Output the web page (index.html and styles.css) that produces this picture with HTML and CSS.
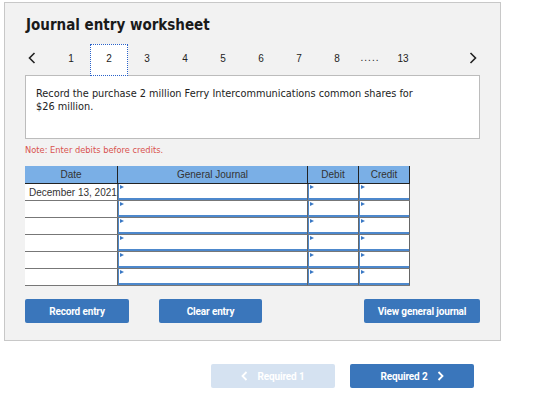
FILE: index.html
```html
<!DOCTYPE html>
<html lang="en">
<head>
    <meta charset="UTF-8">
    <title>Journal entry worksheet</title>
    <link rel="stylesheet" href="styles.css">
</head>
<body>

    <div class="panel">
        <h1 class="title">Journal entry worksheet</h1>

        <div class="pager">
            <span class="arrow prev">
                <svg width="8" height="12" viewBox="0 0 8 12"><polyline points="6.5,1 1.5,6 6.5,11" fill="none" stroke="#222" stroke-width="1.6"/></svg>
            </span>
            <span class="page">1</span>
            <span class="page current">2</span>
            <span class="page">3</span>
            <span class="page">4</span>
            <span class="page">5</span>
            <span class="page">6</span>
            <span class="page">7</span>
            <span class="page">8</span>
            <span class="dots">.....</span>
            <span class="page">13</span>
            <span class="arrow next">
                <svg width="8" height="12" viewBox="0 0 8 12"><polyline points="1.5,1 6.5,6 1.5,11" fill="none" stroke="#222" stroke-width="1.6"/></svg>
            </span>
        </div>

        <div class="task">
            Record the purchase 2 million Ferry Intercommunications common shares for $26 million.
        </div>

        <p class="note">Note: Enter debits before credits.</p>

        <table class="journal">
            <thead>
                <tr>
                    <th class="col-date">Date</th>
                    <th class="col-acct">General Journal</th>
                    <th class="col-debit">Debit</th>
                    <th class="col-credit">Credit</th>
                </tr>
            </thead>
            <tbody>
                <tr>
                    <td class="date">December 13, 2021</td>
                    <td class="entry"><span class="field"></span></td>
                    <td class="entry"><span class="field"></span></td>
                    <td class="entry"><span class="field"></span></td>
                </tr>
                <tr>
                    <td class="date"></td>
                    <td class="entry"><span class="field"></span></td>
                    <td class="entry"><span class="field"></span></td>
                    <td class="entry"><span class="field"></span></td>
                </tr>
                <tr>
                    <td class="date"></td>
                    <td class="entry"><span class="field"></span></td>
                    <td class="entry"><span class="field"></span></td>
                    <td class="entry"><span class="field"></span></td>
                </tr>
                <tr>
                    <td class="date"></td>
                    <td class="entry"><span class="field"></span></td>
                    <td class="entry"><span class="field"></span></td>
                    <td class="entry"><span class="field"></span></td>
                </tr>
                <tr>
                    <td class="date"></td>
                    <td class="entry"><span class="field"></span></td>
                    <td class="entry"><span class="field"></span></td>
                    <td class="entry"><span class="field"></span></td>
                </tr>
                <tr>
                    <td class="date"></td>
                    <td class="entry"><span class="field"></span></td>
                    <td class="entry"><span class="field"></span></td>
                    <td class="entry"><span class="field"></span></td>
                </tr>
            </tbody>
        </table>

        <div class="actions">
            <button class="btn">Record entry</button>
            <button class="btn clear">Clear entry</button>
            <button class="btn view">View general journal</button>
        </div>
    </div>

    <div class="steps">
        <button class="btn step disabled">
            <svg width="7" height="10" viewBox="0 0 7 10"><polyline points="5.5,1 1.5,5 5.5,9" fill="none" stroke="#fff" stroke-width="1.8"/></svg>
            Required 1
        </button>
        <button class="btn step">
            Required 2
            <svg width="7" height="10" viewBox="0 0 7 10"><polyline points="1.5,1 5.5,5 1.5,9" fill="none" stroke="#fff" stroke-width="1.8"/></svg>
        </button>
    </div>

</body>
</html>
```

FILE: styles.css
```css
body {
    margin: 0;
    padding: 0;
    background-color: #ffffff;
    font-family: "DejaVu Sans", Verdana, sans-serif;
    color: #222;
}

.panel {
    margin: 2px 0 0 4px;
    width: 497px;
    padding: 13px 20px 17px 20px;
    box-sizing: border-box;
    background-color: #f2f2f2;
    border: 1px solid #c8c8c8;
}

.title {
    margin: 0 0 0 1px;
    font-family: "DejaVu Sans Condensed", "DejaVu Sans", sans-serif;
    font-size: 15px;
    font-weight: bold;
    line-height: 18px;
    color: #1a1a1a;
}

.pager {
    display: flex;
    align-items: flex-start;
    margin-top: 10px;
    height: 32px;
    font-family: "Liberation Sans", Arial, sans-serif;
    font-size: 10px;
    line-height: 12px;
    color: #222;
}

.arrow {
    display: flex;
    padding-top: 8px;
}

.prev {
    width: 27px;
    padding-left: 3px;
    box-sizing: border-box;
}

.next {
    margin-left: auto;
    margin-right: 3px;
}

.page {
    width: 38px;
    height: 32px;
    padding-top: 8px;
    box-sizing: border-box;
    text-align: center;
    border: 1px dotted transparent;
}

.page.current {
    background-color: #ffffff;
    border-color: #2a62c9;
    position: relative;
    z-index: 1;
}

.dots {
    width: 28px;
    padding-top: 8px;
    letter-spacing: 1px;
    text-align: center;
}

.task {
    margin-top: -1px;
    height: 64px;
    padding: 11px 46px 0 10px;
    box-sizing: border-box;
    background-color: #ffffff;
    border: 1px solid #bcbcbc;
    font-size: 9.75px;
    line-height: 13px;
    color: #222;
}

.note {
    margin: 6px 0 11px 0;
    font-size: 8.3px;
    line-height: 10px;
    color: #d9534f;
}

.journal {
    width: 381px;
    border-collapse: collapse;
    table-layout: fixed;
    font-family: "Liberation Sans", Arial, sans-serif;
    font-size: 10px;
    color: #333;
}

.col-date { width: 92px; }
.col-acct { width: 189px; }
.col-debit { width: 50px; }
.col-credit { width: 50px; }

.journal th {
    height: 17px;
    padding: 0;
    background-color: #7aafe6;
    font-weight: normal;
    border-left: 1px solid #222;
    border-right: 1px solid #222;
    border-bottom: 1px solid #222;
}

.journal th:first-child {
    border-left: none;
}

.journal td {
    height: 16px;
    padding: 0;
    background-color: #ffffff;
    border-bottom: 1px solid #777;
}

.journal td.date {
    padding-left: 4px;
    white-space: nowrap;
    overflow: hidden;
}

.journal td.entry {
    border-left: 1px solid #666;
    border-right: 1px solid #666;
    vertical-align: top;
}

.field {
    display: block;
    position: relative;
    height: 16px;
    border-left: 1px solid #4d88cc;
    border-bottom: 2px solid #4d88cc;
    box-sizing: border-box;
}

.field::before {
    content: "";
    position: absolute;
    left: 1px;
    top: 1px;
    border-left: 4px solid #3a78c4;
    border-top: 2px solid transparent;
    border-bottom: 2px solid transparent;
}

.actions {
    display: flex;
    margin-top: 13px;
}

.btn {
    height: 24px;
    padding: 0;
    border: none;
    border-radius: 2px;
    background-color: #3a76bb;
    color: #ffffff;
    font-family: Roboto, "Liberation Sans", sans-serif;
    font-size: 10px;
    font-weight: bold;
    letter-spacing: -0.15px;
}

.actions .btn {
    width: 104px;
}

.actions .clear {
    width: 103px;
    margin-left: 30px;
}

.actions .view {
    width: 116px;
    margin-left: auto;
}

.steps {
    display: flex;
    justify-content: flex-end;
    gap: 15px;
    width: 474px;
    margin-top: 23px;
}

.step {
    display: flex;
    align-items: center;
    justify-content: center;
    gap: 9px;
    width: 124px;
}

.step.disabled {
    background-color: #d5e2f1;
}
```
